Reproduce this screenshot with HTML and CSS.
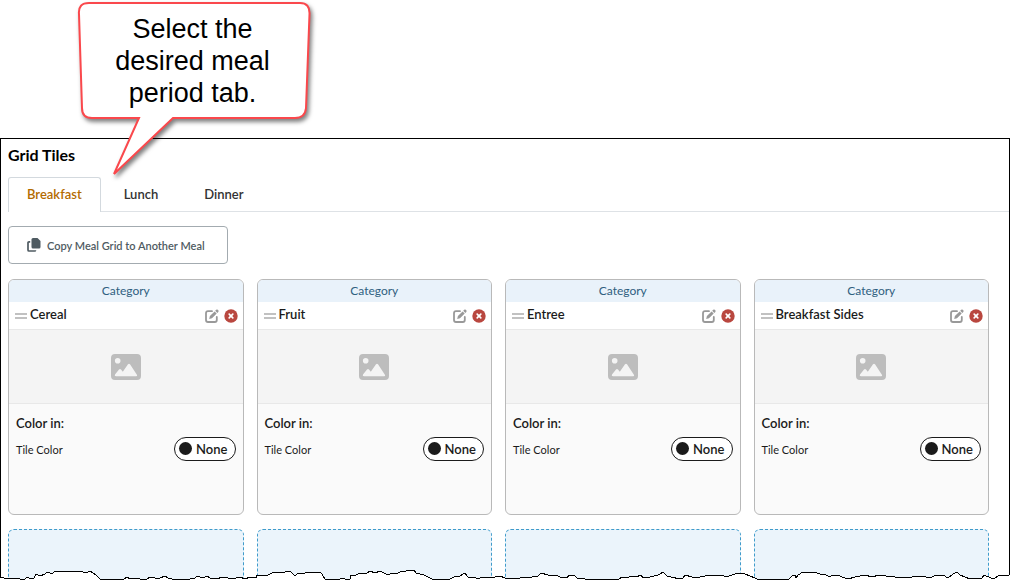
FILE: index.html
```html
<!DOCTYPE html>
<html lang="en">
<head>
    <meta charset="UTF-8">
    <meta name="viewport" content="width=device-width, initial-scale=1.0">
    <title>Grid Tiles</title>
    <link rel="stylesheet" href="styles.css">
</head>
<body>
    <!-- shared icons -->
    <svg class="defs" aria-hidden="true">
        <symbol id="edit" viewBox="0 0 14 14">
            <path d="M7 2.2H3Q1 2.2 1 4.2V11Q1 13 3 13H9.8Q11.8 13 11.8 11V8" fill="none" stroke="currentColor" stroke-width="1.8" stroke-linecap="round"/>
            <path d="M4.2 9.9L4.9 7.1L9.6 2.4L11.7 4.5L7 9.2Z M10.2 1.8L11.2 0.8Q12 0 12.8 0.8L13.3 1.3Q14 2.1 13.3 2.9L12.3 3.9Z" fill="currentColor"/>
        </symbol>
        <symbol id="remove" viewBox="0 0 14 14">
            <circle cx="7" cy="7" r="6.7" fill="currentColor"/>
            <path d="M5.2 5.2L8.8 8.8M8.8 5.2L5.2 8.8" stroke="#fff" stroke-width="1.7" stroke-linecap="round"/>
        </symbol>
        <symbol id="picture" viewBox="0 0 30 26">
            <path fill="currentColor" fill-rule="evenodd" d="M4 0H26Q30 0 30 4V22Q30 26 26 26H4Q0 26 0 22V4Q0 0 4 0Z M6.7 3.9A2.8 2.8 0 1 0 6.7 9.5A2.8 2.8 0 1 0 6.7 3.9Z M5 22.3H25Q26.8 22.3 25.9 20.7L19 10.3Q18 9 17 10.3L11.8 17.7L10 15.5Q9 14.5 8 15.5L4 20.6Q3.1 22.1 5 22.3Z"/>
        </symbol>
    </svg>

    <div class="callout">
        <svg class="bubble" viewBox="0 0 250 190" aria-hidden="true">
            <path d="M29 3H240Q250 3 249.500 14L246 108Q245 118 235 118H113L54 174L79 118H32Q22 118 22 108L19 14Q18 3 29 3Z"/>
        </svg>
        <p>Select the<br>desired meal<br>period tab.</p>
    </div>

    <main class="panel">
        <h1>Grid Tiles</h1>
        <div class="tabs" role="tablist">
            <button type="button" class="tab active" role="tab" aria-selected="true">Breakfast</button>
            <button type="button" class="tab" role="tab" aria-selected="false">Lunch</button>
            <button type="button" class="tab" role="tab" aria-selected="false">Dinner</button>
        </div>

        <button type="button" class="copy">
            <svg width="14" height="14" viewBox="0 0 14 14" aria-hidden="true">
                <path d="M6 0H10.500L13.500 3V9Q13.500 10.500 12 10.500H6Q4.500 10.500 4.500 9V1.500Q4.500 0 6 0Z" fill="currentColor"/>
                <path d="M3.200 3.800H2Q1 3.800 1 4.800V12Q1 13 2 13H7.500Q8.500 13 8.500 12.200" fill="none" stroke="currentColor" stroke-width="1.700"/>
            </svg>
            Copy Meal Grid to Another Meal
        </button>

        <div class="grid">
            <section class="tile">
                <div class="category">Category</div>
                <div class="title">
                    <span class="handle"></span>
                    <h2>Cereal</h2>
                    <button type="button" class="edit" aria-label="Edit Cereal"><svg><use href="#edit"/></svg></button>
                    <button type="button" class="remove" aria-label="Remove Cereal"><svg><use href="#remove"/></svg></button>
                </div>
                <div class="image"><svg><use href="#picture"/></svg></div>
                <div class="colors">
                    <h3>Color in:</h3>
                    <div class="row">
                        <span>Tile Color</span>
                        <button type="button" class="none"><i></i>None</button>
                    </div>
                </div>
            </section>

            <section class="tile">
                <div class="category">Category</div>
                <div class="title">
                    <span class="handle"></span>
                    <h2>Fruit</h2>
                    <button type="button" class="edit" aria-label="Edit Fruit"><svg><use href="#edit"/></svg></button>
                    <button type="button" class="remove" aria-label="Remove Fruit"><svg><use href="#remove"/></svg></button>
                </div>
                <div class="image"><svg><use href="#picture"/></svg></div>
                <div class="colors">
                    <h3>Color in:</h3>
                    <div class="row">
                        <span>Tile Color</span>
                        <button type="button" class="none"><i></i>None</button>
                    </div>
                </div>
            </section>

            <section class="tile">
                <div class="category">Category</div>
                <div class="title">
                    <span class="handle"></span>
                    <h2>Entree</h2>
                    <button type="button" class="edit" aria-label="Edit Entree"><svg><use href="#edit"/></svg></button>
                    <button type="button" class="remove" aria-label="Remove Entree"><svg><use href="#remove"/></svg></button>
                </div>
                <div class="image"><svg><use href="#picture"/></svg></div>
                <div class="colors">
                    <h3>Color in:</h3>
                    <div class="row">
                        <span>Tile Color</span>
                        <button type="button" class="none"><i></i>None</button>
                    </div>
                </div>
            </section>

            <section class="tile">
                <div class="category">Category</div>
                <div class="title">
                    <span class="handle"></span>
                    <h2>Breakfast Sides</h2>
                    <button type="button" class="edit" aria-label="Edit Breakfast Sides"><svg><use href="#edit"/></svg></button>
                    <button type="button" class="remove" aria-label="Remove Breakfast Sides"><svg><use href="#remove"/></svg></button>
                </div>
                <div class="image"><svg><use href="#picture"/></svg></div>
                <div class="colors">
                    <h3>Color in:</h3>
                    <div class="row">
                        <span>Tile Color</span>
                        <button type="button" class="none"><i></i>None</button>
                    </div>
                </div>
            </section>

            <div class="empty"></div>
            <div class="empty"></div>
            <div class="empty"></div>
            <div class="empty"></div>
        </div>
    </main>

    <!-- torn bottom edge -->
    <svg class="torn" viewBox="0 0 1010 20" preserveAspectRatio="none" aria-hidden="true">
        <path d="M-2 22V17H3L5 19L14 18L20 19H25L27 17L29 18H34L36 14L40 16L45 14L47 12L50 13H53L55 11L57 12L62 11H75L76 12L79 11H82L84 13L88 12L90 11L93 13L96 15L100 19H120L124 19L127 17L130 19L136 18L140 19L147 19L150 17L155 18H160L165 16L168 18L172 19H190L195 18L197 16L200 17L203 18L207 16L210 18L215 19L224 17L232 19L240 17L245 19L250 17L256 18L257 15H268L272 13L276 12L281 13L285 12L290 11L294 15H296L298 13H305L308 12H320L322 14L325 19H340L342 18L345 19H350L351 15H356L358 14L367 13L370 11L375 13L380 11L388 15L392 13H398L402 11H406L408 10H414L416 13L420 14L424 15L428 17L432 19H450L454 17L460 16L465 13L468 17H472L476 18H480L484 17L490 18L495 17L500 16L505 18L511 19L516 18H520L532 17L538 16L541 13L548 15H556L560 17L567 18L569 15L574 15L577 18L585 19H619L622 17H629L632 16L637 17L640 15L644 18L650 17L658 15L660 14L663 12L667 16L671 17L680 19L683 18L685 15L692 17H700L705 16L715 15H722L726 17L732 15L738 13H742L745 14L750 16L755 18L757 19H789L792 16L795 15L796 18L798 15L803 12H814L820 14L826 15L830 17L832 15H838L842 17L848 19L855 17L866 15L871 17L880 15L886 16L895 17L901 18L912 17L924 16L926 17L930 18L936 15H943L948 18L953 14L957 12L960 15L965 17L970 19L977 18L982 18L984 15L991 18H995L1000 15H1009L1012 14V22Z"/>
    </svg>
</body>
</html>
```
FILE: styles.css
```css
*{
    margin: 0;
    padding: 0;
    box-sizing: border-box;
}
body{
    height: 100vh;
    padding-top: 138px;
    background-color: #fff;
    color: #1b1b1b;
    font-family: Lato, sans-serif;
    font-size: 13px;
    overflow: hidden;
    position: relative;
}
button{
    font-family: inherit;
    background: none;
    border: none;
    cursor: pointer;
}
.defs{
    display: none;
}
.panel{
    height: 100%;
    border: 1px solid #000;
    border-bottom: none;
    padding: 6px 0 0 7px;
    overflow: hidden;
}
h1{
    font-size: 16px;
    line-height: 20px;
    color: #000;
}
/* tabs */
.tabs{
    display: flex;
    margin-top: 12px;
    border-bottom: 1px solid #dee2e6;
}
.tab{
    height: 34px;
    padding: 0 22px 2px;
    font-size: 13px;
    font-weight: 600;
    color: #333;
    border: 1px solid transparent;
    border-bottom: none;
}
.tab.active{
    height: 35px;
    margin-bottom: -1px;
    padding: 0 18px 2px;
    color: #b36b00;
    background-color: #fff;
    border-color: #d3d9de;
    border-radius: 3px 3px 0 0;
}
.copy{
    display: flex;
    align-items: center;
    gap: 6px;
    height: 38px;
    margin-top: 14px;
    padding: 0 22px 0 18px;
    border: 1px solid #a3abb0;
    border-radius: 4px;
    background-color: #fff;
    color: #4f5b62;
    font-size: 11px;
    font-weight: 600;
}
/* tiles */
.grid{
    display: grid;
    grid-template-columns: repeat(4, 1fr);
    gap: 14px 13px;
    margin-top: 15px;
    padding-right: 20px;
}
.tile{
    height: 236px;
    border: 1px solid #b9b9b9;
    border-radius: 6px;
    background-color: #fafafa;
    overflow: hidden;
}
.category{
    height: 22px;
    line-height: 22px;
    font-size: 12px;
    text-align: center;
    color: #2f6080;
    background-color: #e9f2fa;
}
.title{
    display: flex;
    align-items: center;
    height: 28px;
    padding: 0 5px 0 6px;
    background-color: #fff;
    border-bottom: 1px solid #e8e8e8;
}
.handle{
    width: 12px;
    height: 6px;
    margin-right: 3px;
    border-top: 2px solid #c1c1c1;
    border-bottom: 2px solid #c1c1c1;
}
h2{
    flex: 1;
    font-size: 13px;
    font-weight: 600;
    line-height: 20px;
    padding-bottom: 3px;
}
.title button{
    height: 14px;
}
.title svg{
    display: block;
    width: 14px;
    height: 14px;
}
.edit{
    color: #999;
}
.remove{
    margin-left: 5px;
    color: #b9473f;
}
.image{
    display: flex;
    align-items: center;
    justify-content: center;
    height: 74px;
    color: #bdbdbd;
    background-color: #f4f4f4;
    border-bottom: 1px solid #e8e8e8;
}
.image svg{
    width: 30px;
    height: 26px;
}
.colors{
    padding: 9px 7px;
}
h3{
    font-size: 13px;
    font-weight: 600;
    line-height: 20px;
}
.row{
    display: flex;
    align-items: center;
    justify-content: space-between;
    margin-top: 4px;
    font-size: 11px;
}
.none{
    display: flex;
    align-items: center;
    gap: 4px;
    height: 24px;
    padding: 0 7px 1px 4px;
    border: 1px solid #1b1b1b;
    border-radius: 12px;
    background-color: #fff;
    color: #1b1b1b;
    font-size: 13px;
    font-weight: 600;
}
.none i{
    width: 13px;
    height: 13px;
    border-radius: 50%;
    background-color: #1b1b1b;
}
.empty{
    height: 236px;
    border: 1px dashed #3f9bcb;
    border-radius: 6px;
    background-color: #ebf4fb;
}
/* speech bubble over the panel */
.callout{
    position: absolute;
    top: 0;
    left: 60px;
    width: 250px;
    padding: 13px 0 0 15px;
    text-align: center;
    font-family: "Liberation Sans", Arial, sans-serif;
    font-size: 27px;
    line-height: 32px;
    color: #000;
}
.callout p{
    position: relative;
}
.bubble{
    position: absolute;
    top: 0;
    left: 0;
    width: 250px;
    height: 190px;
    overflow: visible;
    fill: #fff;
    stroke: #fa484c;
    stroke-width: 2;
    filter: drop-shadow(2px 3px 2px rgba(0, 0, 0, 0.5));
}
.torn{
    position: absolute;
    left: 0;
    bottom: 0;
    width: 100%;
    height: 20px;
    fill: #fff;
    stroke: #000;
    stroke-width: 1;
    shape-rendering: crispEdges;
}
```
